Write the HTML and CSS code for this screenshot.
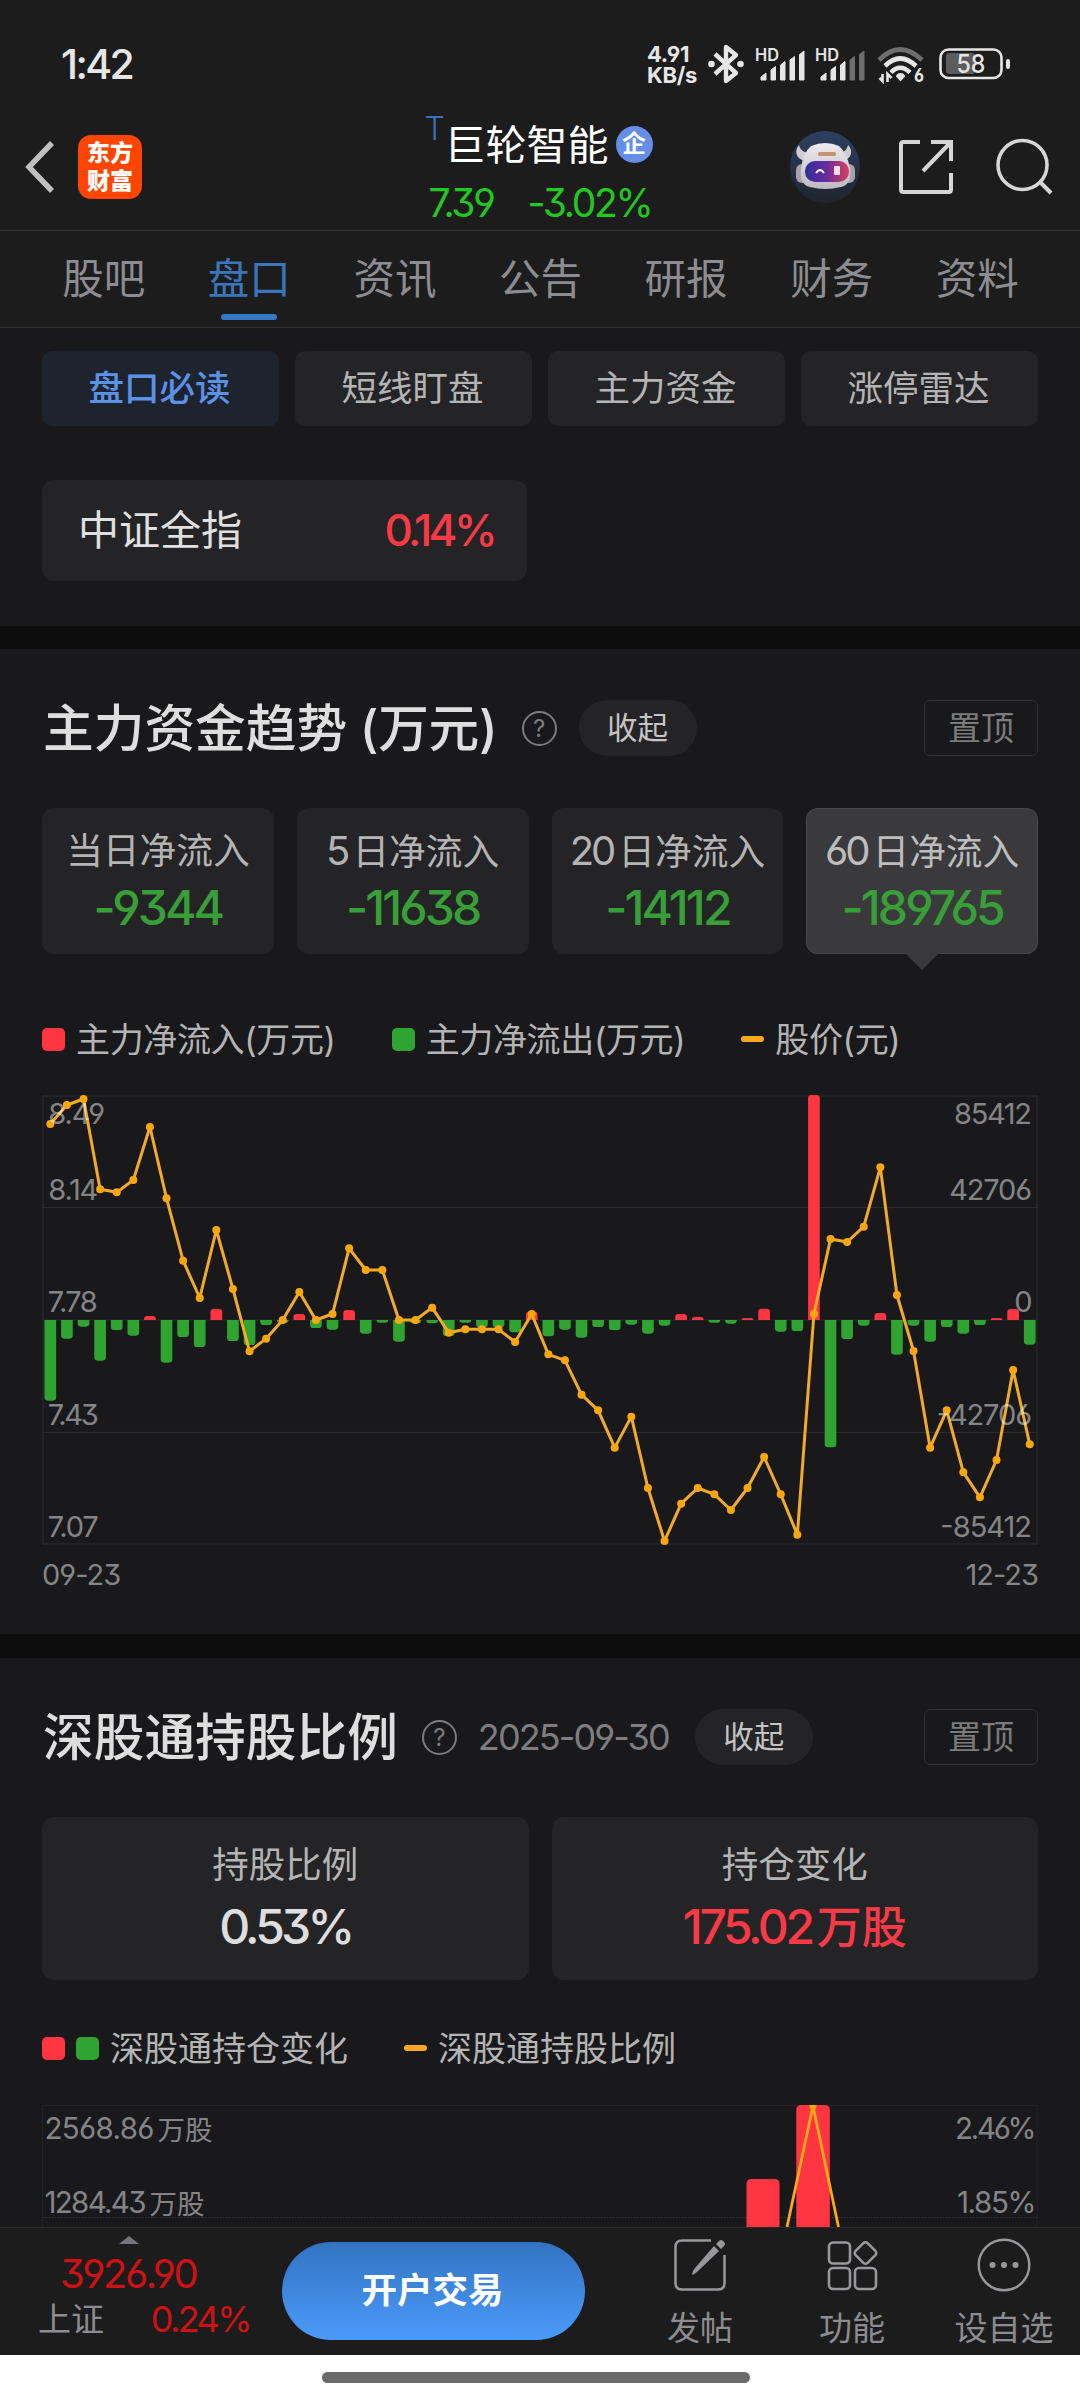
FILE: index.html
```html
<!DOCTYPE html>
<html lang="zh-CN">
<head>
  <meta charset="UTF-8">
  <meta name="viewport" content="width=device-width, initial-scale=1.0">
  <title>巨轮智能</title>
  <link rel="stylesheet" href="styles.css">
</head>
<body>

  <!-- 状态栏 -->
  <div class="status-bar">
    <div class="clock">1:42</div>
    <div class="status-icons">
      <div class="net-speed"><span>4.91</span><span>KB/s</span></div>
      <svg class="bluetooth" width="36" height="40" viewBox="0 0 36 40">
        <path d="M7 10 L28 29 L18 37 V3 L28 11 L7 30" fill="none" stroke="#e6e6e6" stroke-width="4.4" stroke-linejoin="round"/>
        <circle cx="3.5" cy="20" r="3.3" fill="#e6e6e6"/>
        <circle cx="32.5" cy="20" r="3.3" fill="#e6e6e6"/>
      </svg>
      <svg class="signal" width="52" height="34" viewBox="0 0 52 34">
        <text x="0" y="13" textLength="24" lengthAdjust="spacingAndGlyphs">HD</text>
        <path d="M6 32v-3l5-4v7zM16 32V22l4.500-3.500v13.500zM25.500 32V17l4.500-3.500v18.500zM35 32V12l4.500-3.500v23.500zM44.500 32V6.500l4.500-3.500V32z" fill="#e6e6e6" stroke="#e6e6e6" stroke-linejoin="round"/>
      </svg>
      <svg class="signal second" width="52" height="34" viewBox="0 0 52 34">
        <text x="0" y="13" textLength="24" lengthAdjust="spacingAndGlyphs">HD</text>
        <path d="M6 32v-3l5-4v7zM16 32V22l4.500-3.500v13.500zM25.500 32V17l4.500-3.500v18.500z" fill="#e6e6e6" stroke="#e6e6e6" stroke-linejoin="round"/>
        <path d="M35 32V12l4.500-3.500v23.500zM44.500 32V6.500l4.500-3.500V32z" fill="#6e6e6e" stroke="#6e6e6e" stroke-linejoin="round"/>
      </svg>
      <svg class="wifi" width="48" height="38" viewBox="0 0 48 38">
        <g fill="none" stroke-width="4.600">
          <path d="M2 14 Q23 -7 45 14" stroke="#6e6e6e"/>
          <path d="M8 20 Q23 5 39 20" stroke="#e6e6e6"/>
          <path d="M14 26.500 Q23 17 33 26.500" stroke="#e6e6e6"/>
        </g>
        <path d="M23.500 27c3 0 4.500 2 4.500 3.500l-4.500 5-4.500-5c0-1.500 1.500-3.500 4.500-3.500z" fill="#e6e6e6"/>
        <path d="M5.500 28v7l-3-3M10.500 36v-8l4 4" fill="none" stroke="#e6e6e6" stroke-width="2.600"/>
        <text x="37" y="36" textLength="10" lengthAdjust="spacingAndGlyphs">6</text>
      </svg>
      <svg class="battery" width="72" height="32" viewBox="0 0 72 32">
        <rect x="1.500" y="1.500" width="61" height="28.500" rx="8" fill="none" stroke="#e6e6e6" stroke-width="2.600"/>
        <rect x="7" y="5" width="29" height="21" rx="3" fill="#5c5c5c"/>
        <rect x="67" y="11" width="4" height="10" rx="2" fill="#e6e6e6"/>
        <text x="32" y="25" text-anchor="middle" textLength="29" lengthAdjust="spacingAndGlyphs">58</text>
      </svg>
    </div>
  </div>

  <!-- 顶部标题 -->
  <div class="header">
    <div class="header-left">
      <svg width="32" height="56" viewBox="0 0 32 56">
        <path d="M28 4 L5 28 L28 52" fill="none" stroke="#c0c0c0" stroke-width="5.500"/>
      </svg>
      <div class="logo">东方<br>财富</div>
    </div>
    <div class="stock">
      <div class="stock-name"><span class="flag">T</span>巨轮智能<span class="badge">企</span></div>
      <div class="stock-price"><span>7.39</span><span>-3.02%</span></div>
    </div>
    <div class="header-right">
      <svg width="70" height="72" viewBox="0 0 70 72">
        <defs>
          <linearGradient id="sky" x1="0" y1="0" x2="0" y2="1">
            <stop offset="0" stop-color="#2d4062"/>
            <stop offset="1" stop-color="#20242c"/>
          </linearGradient>
          <linearGradient id="visor" x1="0" y1="0" x2="1" y2="0">
            <stop offset="0" stop-color="#2f2f9a"/>
            <stop offset="0.500" stop-color="#6a2c9c"/>
            <stop offset="1" stop-color="#d8405c"/>
          </linearGradient>
          <linearGradient id="helmet" x1="0" y1="0" x2="0" y2="1">
            <stop offset="0" stop-color="#ecebef"/>
            <stop offset="1" stop-color="#bdbac2"/>
          </linearGradient>
        </defs>
        <ellipse cx="35" cy="36" rx="35" ry="36" fill="url(#sky)"/>
        <path d="M9 14c-5 6-3 14 6 16l6-8c-7 0-11-3-12-8zM58 14c6 6 3 14-5 16l-6-8c7 0 10-3 11-8z" fill="#d0ced4"/>
        <rect x="6" y="33" width="12" height="19" rx="6" fill="#a5a2ab"/>
        <rect x="53" y="33" width="12" height="19" rx="6" fill="#a5a2ab"/>
        <path d="M21 15q14-6 28 0q8 7 11 22q2 17-9 19q-16 4-31 0q-11-2-9-19q2-15 10-22z" fill="url(#helmet)"/>
        <rect x="28" y="21" width="18" height="4" rx="1.500" fill="#c8936e"/>
        <rect x="15" y="30" width="44" height="21" rx="10" fill="url(#visor)"/>
        <path d="M26 42q4-6 8 0" fill="none" stroke="#fff" stroke-width="1.800"/>
        <rect x="44" y="35" width="6" height="9" rx="1" fill="#f3dfe9"/>
      </svg>
      <svg width="56" height="56" viewBox="0 0 56 56">
        <path d="M22 3H5.500Q3 3 3 5.500V50.500Q3 53 5.500 53H50.500Q53 53 53 50.500V34M33 3H53V22M52 4L25 32" fill="none" stroke="#d6d6d6" stroke-width="4"/>
      </svg>
      <svg width="58" height="58" viewBox="0 0 58 58">
        <circle cx="27.500" cy="27" r="24.500" fill="none" stroke="#d6d6d6" stroke-width="3.600"/>
        <path d="M44 43L56 55" stroke="#d6d6d6" stroke-width="4"/>
      </svg>
    </div>
  </div>

  <div class="tabs">
    <div class="tab">股吧</div>
    <div class="tab active">盘口</div>
    <div class="tab">资讯</div>
    <div class="tab">公告</div>
    <div class="tab">研报</div>
    <div class="tab">财务</div>
    <div class="tab">资料</div>
  </div>

  <div class="content">
    <div class="section first">
      <div class="chips">
        <div class="chip active">盘口必读</div>
        <div class="chip">短线盯盘</div>
        <div class="chip">主力资金</div>
        <div class="chip">涨停雷达</div>
      </div>
      <div class="index-card"><span>中证全指</span><span class="num red">0.14%</span></div>
    </div>

    <!-- 主力资金趋势 -->
    <div class="section">
      <div class="section-head">
        <h2>主力资金趋势 <span class="unit">(万元)</span></h2>
        <div class="help">?</div>
        <div class="pill">收起</div>
        <div class="pin">置顶</div>
      </div>
      <div class="flows">
        <div class="flow"><span>当日净流入</span><b>-9344</b></div>
        <div class="flow"><span><i>5</i>日净流入</span><b>-11638</b></div>
        <div class="flow"><span><i>20</i>日净流入</span><b>-14112</b></div>
        <div class="flow active"><span><i>60</i>日净流入</span><b>-189765</b></div>
      </div>
      <div class="legend">
        <span class="dot red-bg"></span><span class="legend-text">主力净流入(万元)</span>
        <span class="dot green-bg"></span><span class="legend-text">主力净流出(万元)</span>
        <span class="dash"></span><span class="legend-text">股价(元)</span>
      </div>
      <svg class="chart" width="996" height="450" viewBox="0 45 2988 1350">
        <rect x="3" y="48" width="2982" height="1344" fill="none" stroke="#232325" stroke-width="6"/>
        <path d="M0 382H2988M0 1057H2988" stroke="#2e2e30" stroke-width="3"/>
        <path d="M0 720H2988" stroke="#232325" stroke-width="5"/>
        <g id="bars"></g>
        <polyline id="priceLine" fill="none" stroke="#f2ab28" stroke-width="9" stroke-linejoin="round"/>
        <g id="priceDots" fill="#faa70f"></g>
        <g class="axis">
          <text x="19" y="131" textLength="170">8.49</text>
          <text x="19" y="359" textLength="150">8.14</text>
          <text x="17" y="695" textLength="150">7.78</text>
          <text x="17" y="1034" textLength="153">7.43</text>
          <text x="17" y="1370" textLength="153">7.07</text>
          <text x="2736" y="131" textLength="234">85412</text>
          <text x="2722" y="359" textLength="248">42706</text>
          <text x="2917" y="695" textLength="52">0</text>
          <text x="2684" y="1034" textLength="286">-42706</text>
          <text x="2695" y="1370" textLength="275">-85412</text>
        </g>
      </svg>
      <div class="dates"><span>09-23</span><span>12-23</span></div>
    </div>

    <!-- 深股通持股比例 -->
    <div class="section last">
      <div class="section-head">
        <h2>深股通持股比例</h2>
        <div class="help">?</div>
        <div class="report-date">2025-09-30</div>
        <div class="pill">收起</div>
        <div class="pin">置顶</div>
      </div>
      <div class="holdings">
        <div class="holding"><span>持股比例</span><b>0.53%</b></div>
        <div class="holding"><span>持仓变化</span><b class="red">175.02<em>万股</em></b></div>
      </div>
      <div class="legend second">
        <span class="dot red-bg"></span><span class="dot green-bg"></span><span class="legend-text">深股通持仓变化</span>
        <span class="dash"></span><span class="legend-text">深股通持股比例</span>
      </div>
      <svg class="chart" width="996" height="122" viewBox="0 0 996 122">
        <path d="M0.500 122V0.500H995V122" fill="none" stroke="#222224"/>
        <path d="M1 112.500H995" stroke="#343436" stroke-dasharray="1.500 1.500"/>
        <path d="M704.500 122V79q0-5 5-5h23q5 0 5 5v43zM754.300 122V5q0-5 5-5h23.500q5 0 5 5v117z" fill="#ff3542"/>
        <path d="M745 122L771 1L796.500 122" fill="none" stroke="#faa81c" stroke-width="2.800"/>
        <path d="M767 0h8l-2 5h-4z" fill="#faa70f"/>
        <g class="axis small">
          <text x="2.500" y="34" textLength="110">2568.86</text>
          <text class="cn" x="115.500" y="34.500" textLength="55">万股</text>
          <text x="2.500" y="108" textLength="102">1284.43</text>
          <text class="cn" x="107.500" y="108.500" textLength="55">万股</text>
          <text x="913" y="34" textLength="81.500">2.46%</text>
          <text x="915" y="108" textLength="79.500">1.85%</text>
        </g>
      </svg>
    </div>
  </div>

  <!-- 底部操作栏 -->
  <div class="bottom-bar">
    <div class="market">
      <div class="arrow-up"></div>
      <div class="market-value">3926.90</div>
      <div class="market-row"><span>上证</span><span class="market-change">0.24%</span></div>
    </div>
    <div class="trade-button">开户交易</div>
    <div class="actions">
      <div class="action">
        <svg width="54" height="54" viewBox="0 0 54 54">
          <path d="M38 2.500H9Q2.500 2.500 2.500 9V45Q2.500 51.500 9 51.500H45Q51.500 51.500 51.500 45V17" fill="none" stroke="#98989c" stroke-width="2.500"/>
          <path d="M46 3q2-2 4 0l1 1q2 2 0 4l-3 3-5-5zM41 8l5 5L25 33q-3 3-6 4 0-4 3-7z" fill="#98989c"/>
        </svg>
        <span>发帖</span>
      </div>
      <div class="action">
        <svg width="54" height="54" viewBox="0 0 54 54">
          <g fill="none" stroke="#98989c" stroke-width="2.600">
            <rect x="4" y="4.500" width="21" height="21" rx="4"/>
            <rect x="4" y="30" width="21" height="21" rx="4"/>
            <rect x="30" y="30" width="21" height="21" rx="4"/>
            <rect x="32" y="6.500" width="17" height="17" rx="3" transform="rotate(45 40.500 15)"/>
          </g>
        </svg>
        <span>功能</span>
      </div>
      <div class="action">
        <svg width="54" height="54" viewBox="0 0 54 54">
          <circle cx="27" cy="27" r="25.300" fill="none" stroke="#98989c" stroke-width="2.400"/>
          <g fill="#98989c">
            <circle cx="15.500" cy="27" r="3"/>
            <circle cx="27" cy="27" r="3"/>
            <circle cx="38.500" cy="27" r="3"/>
          </g>
        </svg>
        <span>设自选</span>
      </div>
    </div>
  </div>
  <div class="home-area"><div class="home-indicator"></div></div>

  <script src="script.js"></script>
</body>
</html>
```
FILE: styles.css
```css
* {
  box-sizing: border-box;
}

body {
  margin: 0;
  width: 1080px;
  height: 2400px;
  overflow: hidden;
  display: flex;
  flex-direction: column;
  background-color: #19191b;
  color: #b4b4b4;
  font-family: Inter, "Noto Sans CJK SC", sans-serif;
  font-feature-settings: "cv03", "cv04", "cv09";
}

svg {
  display: block;
  flex: none;
  overflow: visible;
}

.red { color: #f93a46; }
.red-bg { background-color: #ff3542; }
.green-bg { background-color: #30a430; }

/* 状态栏 */
.status-bar {
  height: 100px;
  flex: none;
  padding: 44px 69px 0 61px;
  display: flex;
  justify-content: space-between;
  background-color: #1c1c1c;
  color: #e6e6e6;
}

.clock {
  height: 40px;
  line-height: 40px;
  font-size: 41px;
  font-weight: 500;
  letter-spacing: -2.600px;
}

.status-icons {
  display: flex;
  height: 40px;
}

.net-speed {
  width: 61px;
  display: flex;
  flex-direction: column;
  font-size: 22px;
  font-weight: 700;
  line-height: 21px;
  letter-spacing: -0.3px;
}

.bluetooth { margin-right: 11px; }
.signal { margin-top: 4px; margin-right: 8px; }
.signal.second { margin-right: 10px; }
.wifi { margin-top: 2px; margin-right: 14px; }
.battery { margin-top: 4px; }
.status-icons text { fill: #e6e6e6; font-weight: 600; }
.signal text { font-size: 17px; }
.wifi text { font-size: 19px; font-weight: 700; }
.battery text { font-size: 26px; font-weight: 500; }

/* 标题 */
.header {
  height: 131px;
  flex: none;
  display: grid;
  grid-template-columns: 1fr auto 1fr;
  align-items: start;
  padding: 16px 27px 0 24px;
  background-color: #1c1c1c;
  border-bottom: 1px solid #303030;
}

.header-left {
  display: flex;
  align-items: center;
  gap: 22px;
  padding-top: 19px;
}

.logo {
  width: 64px;
  height: 64px;
  padding-top: 4px;
  border-radius: 13px;
  background-color: #ff4500;
  color: #fff;
  font-size: 23px;
  line-height: 28px;
  font-weight: 900;
  text-align: center;
}

.stock-name {
  display: flex;
  height: 56px;
  line-height: 58px;
  font-size: 41px;
  color: #fff;
}

.flag {
  width: 20px;
  line-height: 25px;
  font-size: 32px;
  font-weight: 300;
  color: #3a73b8;
}

.badge {
  width: 37px;
  height: 37px;
  margin: 10px 0 0 7px;
  border-radius: 50%;
  background-color: #658fe6;
  font-size: 24px;
  line-height: 36px;
  font-weight: 700;
  text-align: center;
}

.stock-price {
  display: flex;
  gap: 34px;
  padding-left: 4px;
  height: 60px;
  line-height: 61px;
  font-size: 39px;
  letter-spacing: -2.300px;
  color: #20c820;
}

.header-right {
  display: flex;
  justify-content: flex-end;
  align-items: center;
  gap: 38px;
  padding-top: 15px;
}

.header-right svg:last-child { margin-left: 3px; }

.tabs {
  height: 97px;
  flex: none;
  display: grid;
  grid-template-columns: repeat(7, 1fr);
  padding: 0 30px 0 31px;
  background-color: #1c1c1c;
  border-bottom: 1px solid #2f2f2f;
}

.tab {
  display: flex;
  flex-direction: column;
  align-items: center;
  height: 96px;
  font-size: 41.500px;
  line-height: 97px;
  color: #8c8c91;
}

.tab.active { color: #3a76bc; }

.tab.active::after {
  content: "";
  width: 56px;
  height: 6px;
  margin-top: -14px;
  border-radius: 3px;
  background-color: #3478c6;
}

/* 内容 */
.content {
  flex: 1;
  min-height: 0;
  overflow: hidden;
}

.section {
  padding: 51px 42px 0;
  height: 1008px;
  border-top: 23px solid #0d0d0d;
}

.section.first {
  height: 298px;
  padding-top: 23px;
  border-top: 0;
}

.section.last { border-top-width: 24px; }

.chips {
  display: grid;
  grid-template-columns: repeat(4, 1fr);
  gap: 16px;
}

.chip {
  height: 75px;
  padding-right: 2px;
  line-height: 75px;
  border-radius: 10px;
  background-color: #242426;
  font-size: 35.500px;
  text-align: center;
}

.chip.active {
  background-color: #1e242e;
  color: #5b91e6;
  font-weight: 500;
}

.index-card {
  width: 485px;
  height: 101px;
  margin-top: 54px;
  padding: 0 33px 0 36px;
  display: flex;
  justify-content: space-between;
  line-height: 101px;
  border-radius: 12px;
  background-color: #242426;
  color: #e0e0e0;
  font-size: 41px;
}

.index-card .num {
  color: #f93a46;
  font-size: 44px;
  font-weight: 500;
  line-height: 101px;
  letter-spacing: -3.600px;
}

.section-head {
  display: flex;
  height: 56px;
  align-items: center;
}

h2 {
  margin: 0 24px 0 1px;
  padding-top: 2px;
  font-size: 50.700px;
  line-height: 56px;
  font-weight: 500;
  color: #dedede;
}

.unit { margin-left: -1px; letter-spacing: -0.200px; }

.help {
  width: 35px;
  height: 35px;
  border: 2px solid #7b7b7b;
  border-radius: 50%;
  color: #7b7b7b;
  font-size: 24px;
  line-height: 31px;
  text-align: center;
}

.pill {
  width: 118px;
  height: 56px;
  margin-left: 22px;
  border-radius: 28px;
  background-color: #242426;
  color: #c4c4c4;
  font-size: 30.500px;
  line-height: 56px;
  text-align: center;
}

.pin {
  width: 114px;
  height: 56px;
  margin-left: auto;
  border: 1px solid #303032;
  border-radius: 6px;
  color: #7c7c7c;
  font-size: 33px;
  line-height: 55px;
  text-align: center;
}

.report-date {
  margin-left: 21px;
  width: 195px;
  font-size: 36px;
  letter-spacing: -1.900px;
  white-space: nowrap;
  color: #7e7e7e;
}

.flows {
  display: grid;
  grid-template-columns: repeat(4, 1fr);
  gap: 23px;
  margin-top: 52px;
}

.flow {
  height: 146px;
  padding-top: 18px;
  display: flex;
  flex-direction: column;
  align-items: center;
  border-radius: 12px;
  background-color: #242426;
}

.flow span {
  height: 50px;
  line-height: 50px;
  font-size: 36.700px;
  white-space: nowrap;
}

.flow i {
  margin-right: 5px;
  font-size: 40px;
  font-style: normal;
  letter-spacing: -3px;
}

.flow b {
  line-height: 64px;
  font-size: 48px;
  font-weight: 500;
  letter-spacing: -2.900px;
  color: #389e38;
}

.flow.active {
  position: relative;
  background-color: #3a3a3c;
  box-shadow: inset 0 0 0 1px #464648;
  color: #bdbdbd;
}

/* 选中卡片下方的小三角 */
.flow.active::after {
  content: "";
  position: absolute;
  left: 99px;
  top: 145px;
  border: 17px solid transparent;
  border-top-color: #3a3a3c;
  border-bottom: 0;
}

.legend {
  display: flex;
  align-items: center;
  height: 50px;
  margin-top: 60px;
}

.dot {
  width: 23px;
  height: 23px;
  margin-right: 11px;
  border-radius: 5px;
}

.dash {
  width: 23px;
  height: 6px;
  margin-right: 11px;
  border-radius: 3px;
  background-color: #faa81c;
}

.legend-text {
  margin-right: 56px;
  font-size: 34px;
  line-height: 51px;
  letter-spacing: -0.350px;
}

.legend.second { margin-top: 43px; }
.legend.second .legend-text { letter-spacing: 0; }

.chart {
  margin-top: 31px;
}

.legend.second + .chart { margin-top: 32px; }

.axis text {
  fill: rgba(255, 255, 255, 0.48);
  font-size: 87px;
}

.axis.small text { font-size: 29.500px; }
.axis.small .cn { font-size: 27.500px; }

.dates {
  display: flex;
  justify-content: space-between;
  margin-top: 10px;
  font-size: 29px;
  line-height: 40px;
  letter-spacing: -1px;
  color: #858585;
}

.holdings {
  display: grid;
  grid-template-columns: 1fr 1fr;
  gap: 23px;
  margin-top: 52px;
}

.holding {
  height: 163px;
  padding-top: 23px;
  display: flex;
  flex-direction: column;
  align-items: center;
  border-radius: 12px;
  background-color: #242426;
}

.holding span {
  font-size: 36.500px;
  line-height: 50px;
}

.holding b {
  font-size: 48px;
  line-height: 74px;
  font-weight: 500;
  letter-spacing: -3.800px;
  color: #dedede;
}

.holding b.red {
  color: #f93a46;
  letter-spacing: -3.400px;
}

.holding em {
  margin-left: 5px;
  font-size: 45px;
  font-style: normal;
  letter-spacing: 0;
}

/* 底部栏 */
.bottom-bar {
  height: 128px;
  flex: none;
  display: flex;
  background-color: #1c1c1c;
  border-top: 1px solid #2b2b2b;
}

.market {
  width: 282px;
  display: flex;
  flex-direction: column;
}

.arrow-up {
  margin: 8px 0 0 119px;
  width: 20px;
  border: 10px solid transparent;
  border-top: 0;
  border-bottom: 8px solid #77747b;
}

.market-value {
  margin-left: 60px;
  height: 58px;
  line-height: 59px;
  font-size: 40px;
  letter-spacing: -2.500px;
  color: #cc1212;
}

.market-row {
  display: flex;
  justify-content: space-between;
  padding: 0 32px 0 38px;
  height: 32px;
  line-height: 34px;
  font-size: 33px;
  color: #8c8c91;
}

.market-change {
  font-size: 36px;
  letter-spacing: -2.600px;
  color: #cc1212;
}

.trade-button {
  width: 303px;
  height: 98px;
  margin-top: 14px;
  padding-right: 2px;
  border-radius: 49px;
  background: linear-gradient(#3273c1, #4b9bfb);
  color: #fff;
  font-size: 35.500px;
  font-weight: 700;
  line-height: 97px;
  text-align: center;
}

.actions {
  display: flex;
  margin-left: 39px;
}

.action {
  width: 152px;
  padding-top: 10px;
  display: flex;
  flex-direction: column;
  align-items: center;
  font-size: 33px;
  line-height: 40px;
  color: #8c8c91;
}

.action span { margin-top: 16px; }

.home-area {
  height: 45px;
  flex: none;
  background-color: #fff;
}

.home-indicator {
  width: 428px;
  height: 11px;
  margin: 17px auto 0 322px;
  border-radius: 6px;
  background-color: #6a6a6a;
}
```
FILE: script.js
```js
const ZERO = 720;
const STEP = 49.8;
const BAR_WIDTH = 35;

// 股价折线
const price = [
  132, 75, 57, 328, 337, 300, 141, 355, 542, 654,
  450, 627, 814, 776, 720, 636, 720, 702, 505, 570,
  570, 720, 720, 683, 758, 748, 748, 748, 786, 702,
  823, 841, 944, 991, 1103, 1010, 1224, 1383, 1271, 1224,
  1243, 1290, 1224, 1131, 1243, 1364, 702, 477, 486, 440,
  262, 645, 813, 1103, 991, 1177, 1252, 1140, 870, 1093
];

// 资金柱, 小于 ZERO 为流入
const flow = [
  962, 776, 740, 842, 750, 767, 708, 848, 771, 801,
  687, 783, 795, 735, 729, 702, 744, 749, 690, 761,
  728, 785, 730, 730, 768, 728, 742, 742, 757, 695,
  769, 749, 773, 741, 750, 734, 761, 737, 702, 711,
  728, 731, 714, 686, 755, 753, 45, 1102, 777, 737,
  699, 824, 737, 785, 741, 761, 735, 714, 687, 794
];

function xOf(i) {
  return 25 + i * STEP;
}

let bars = '';
flow.forEach((end, i) => {
  const x = xOf(i) - BAR_WIDTH / 2;
  const h = end - ZERO;
  const r = Math.min(10, Math.abs(h)) * Math.sign(h);
  const a = Math.abs(r);
  const color = h < 0 ? '#ff3542' : '#30a430';
  bars += `<path fill="${color}" d="M${x} ${ZERO}V${end - r}q0 ${r} ${a} ${r}h${BAR_WIDTH - 2 * a}q${a} 0 ${a} ${-r}V${ZERO}z"/>`;
});
document.getElementById('bars').innerHTML = bars;

document.getElementById('priceLine').setAttribute('points', price.map((y, i) => `${xOf(i)},${y}`).join(' '));
document.getElementById('priceDots').innerHTML = price.map((y, i) => `<circle cx="${xOf(i)}" cy="${y}" r="12"/>`).join('');
```
